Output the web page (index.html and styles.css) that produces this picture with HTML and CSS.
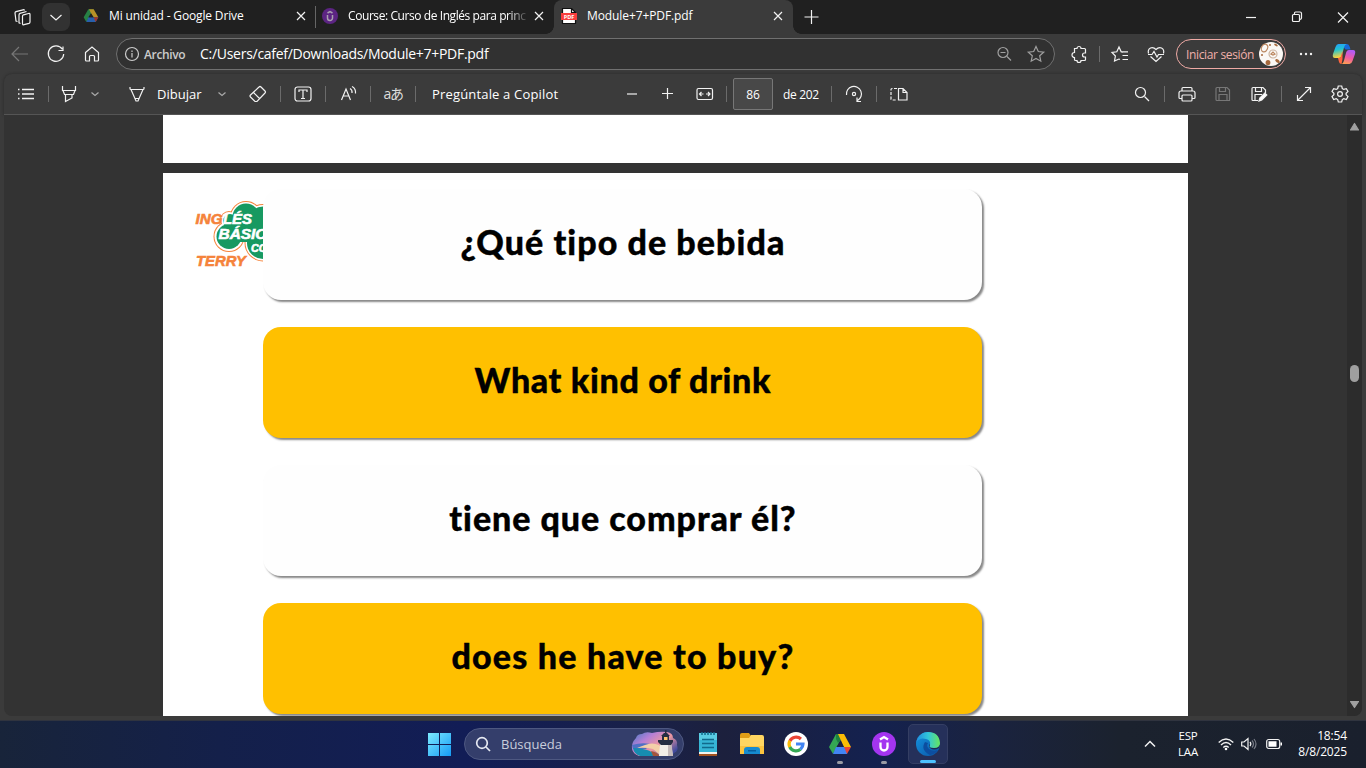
FILE: index.html
```html
<!DOCTYPE html>
<html lang="es">
<head>
<meta charset="utf-8">
<title>Module+7+PDF.pdf</title>
<link rel="stylesheet" href="styles.css">
</head>
<body>
<div class="tabs">
  <svg class="i24 ws" viewBox="0 0 24 24"><path d="M12.500 11.200q0-1 1-1.400l5-1.300q1.500-.4 1.500 1V17q0 1-1 1.400l-5 1.300q-1.500.4-1.500-1zM10.500 18.500 9 17.800V10q0-1.200 1-1.600l6.500-1.900M7.500 16.500 6 16l-1-8q0-1 1-1.400L13 4.800q1.200-.3 1.500.7"/></svg>
  <div class="tabmenu"><svg class="i16" viewBox="0 0 16 16"><path d="m2.500 6 5.500 5 5.500-5"/></svg></div>
  <div class="tab t1">
    <svg class="i16 plain" viewBox="0 0 24 24"><path fill="#278045" d="M8 2h8L5 21 1 14z"/><path fill="#b99126" d="M9 2h7l7 12h-8z"/><path fill="#285fab" d="M8 14h15l-4 7H5z"/><path fill="#a33529" d="M16 14h7l-4 7z"/><path fill="#202020" d="m12 8 4 6H8z"/></svg>
    <span class="ttl a">Mi unidad - Google Drive</span>
    <svg class="i16 x" viewBox="0 0 16 16"><path d="m4 4 8 8m0-8-8 8"/></svg>
  </div>
  <div class="tab t2">
    <svg class="i16 plain" viewBox="0 0 16 16"><circle cx="8" cy="8" r="8" fill="#5c2483"/><path d="M5.500 7v3a2.500 2.500 0 0 0 5 0V7M5.500 5 8 3.500 10.500 5" fill="none" stroke="#aaa0b0" stroke-width="1.500"/></svg>
    <span class="ttl b">Course: Curso de Inglés para princ</span>
    <svg class="i16 x" viewBox="0 0 16 16"><path d="m4 4 8 8m0-8-8 8"/></svg>
  </div>
  <div class="tab t3">
    <svg class="i16 plain" viewBox="0 0 16 16"><path d="M1.500.5h9l4 4v11h-13z" fill="#fff" stroke="#111"/><path d="M10.500.5v4h4" fill="none" stroke="#111"/><path fill="#f83e3e" d="M0 5h16v7H0z"/><text x="8" y="10.700" text-anchor="middle" class="pdf">PDF</text></svg>
    <span class="ttl c">Module+7+PDF.pdf</span>
    <svg class="i16 x" viewBox="0 0 16 16"><path d="m4 4 8 8m0-8-8 8"/></svg>
  </div>
  <svg class="i16 plus" viewBox="0 0 16 16"><path d="M8.500 1v14M1.500 8h14"/></svg>
  <div class="win">
    <svg class="i16" viewBox="0 0 16 16"><path d="M3 8.500h10"/></svg>
    <svg class="i16" viewBox="0 0 16 16"><rect x="3.500" y="5.500" width="7" height="7" rx="1"/><path d="M5.500 5V4q0-1 1-1H11q1.500 0 1.500 1.500V9q0 1-1.500 1.500"/></svg>
    <svg class="i16" viewBox="0 0 16 16"><path d="m3 3.500 10 10m0-10-10 10"/></svg>
  </div>
</div>

<div class="nav">
  <svg class="i24 dim" viewBox="0 0 24 24"><path d="M20 12H4m7-7-7 7 7 7"/></svg>
  <svg class="i24" viewBox="0 0 24 24"><path d="M18.300 7.200a7.700 7.700 0 1 0 1.400 4.800M19 4.500v4h-4.500"/></svg>
  <svg class="i24" viewBox="0 0 24 24"><path d="M5.500 10.500 12 5l6.500 5.500V18q0 1-1 1h-3v-4.500q0-1-1-1h-3q-1 0-1 1V19h-3q-1 0-1-1z"/></svg>
  <div class="addr">
    <svg class="i16 soft" viewBox="0 0 16 16"><circle cx="8" cy="8" r="6.500"/><path d="M8 7v4.500M8 4.500V6"/></svg>
    <span class="arch">Archivo</span><span class="url">C:/Users/cafef/Downloads/Module+7+PDF.pdf</span>
    <svg class="i24 mid zout" viewBox="0 0 24 24"><circle cx="11" cy="10.500" r="5"/><path d="m15 14.500 4 4M8.500 10.500h5"/></svg>
    <svg class="i24 mid" viewBox="0 0 24 24"><path d="m12 4.500 2.300 5 5.400.6-4 3.700 1.100 5.400-4.800-2.700-4.800 2.700 1.100-5.400-4-3.700 5.400-.6z"/></svg>
  </div>
  <svg class="i24 ext" viewBox="0 0 24 24"><path d="M7.500 6.500H10a2 2 0 0 1 4 0h3.500q1 0 1 1V11h-1a2 2 0 0 0 0 4h1v2.500q0 1-1 1H14a2 2 0 0 1-4 0H8.500q-1 0-1-1V15.500a2.500 2.500 0 0 1 0-5z"/></svg>
  <i class="sep"></i>
  <svg class="i24" viewBox="0 0 24 24"><path d="m11 17-4.500 2 .9-5L4 10.500l4.800-.7L11 5l2.200 4.800H20M14.500 13.500H20M14.500 17.500H20M11 17l1 .5M13.500 10l1.500.2"/></svg>
  <svg class="i24 heart" viewBox="0 0 24 24"><path d="M4.500 11.500q-1-4 2-5.500 3-1 5.500 1.500Q14.500 5 17.500 6q3 1.500 2 5.500M6.500 14.500 12 19.500l5.500-5M4 12.500h4l2-3 3 5.500 1.500-2.500H20"/></svg>
  <div class="login"><span>Iniciar sesión</span>
    <svg class="avatar" viewBox="0 0 24 24"><circle cx="12" cy="12" r="12" fill="#fbf8f5"/><g fill="none" stroke="#bc8861"><ellipse cx="5.500" cy="6" rx="3" ry="4" transform="rotate(25 5.500 6)"/><circle cx="14" cy="12" r="4" stroke="#cdb5a2"/><path d="m12 12 2-2 2 2-2 1z"/></g><g fill="#a6683c"><ellipse cx="9" cy="20.500" rx="2.400" ry="2.600"/><ellipse cx="18.500" cy="19" rx="2.500" ry="1.600" transform="rotate(35 18.500 19)"/><ellipse cx="17" cy="3" rx="2" ry="1" transform="rotate(30 17 3)"/><circle cx="11" cy="3" r="1"/><circle cx="3" cy="13" r="1"/></g></svg>
  </div>
  <svg class="i24 dots" viewBox="0 0 24 24"><circle cx="7" cy="12" r="1.200"/><circle cx="12" cy="12" r="1.200"/><circle cx="17" cy="12" r="1.200"/></svg>
  <svg class="i24 plain copilot" viewBox="0 0 24 24">
    <defs><linearGradient id="c1" x2=".2" y2="1"><stop stop-color="#269bff"/><stop offset=".45" stop-color="#21c4cf"/><stop offset="1" stop-color="#ffd13b"/></linearGradient><linearGradient id="c2" x1=".5" x2=".2" y2="1"><stop stop-color="#b15bf6"/><stop offset=".5" stop-color="#ef5aa4"/><stop offset="1" stop-color="#ffa34b"/></linearGradient></defs>
    <path fill="#1768d8" d="M9 2h6q2 0 2.800 3l.7 2.500h-5z"/><path fill="url(#c1)" d="M6.500 2H15q-2 0-3 3.500L10 13q-.7 3-3 3H3q-3 0-2-4L3.500 5Q4.500 2 6.500 2z"/><path fill="#ff643e" d="M8.500 15.500 10.500 9v8l-1 5q-2 0-2.500-2l-1-4z"/><path fill="url(#c2)" d="M17 8h4q3 0 2 4l-2.500 7q-1 3-3 3H9q2 0 3-3.500l2-7.500q.7-3 3-3z"/></svg>
</div>

<div class="tools">
  <svg class="i24" viewBox="0 0 24 24"><path d="M8 7.500h12M8 12h12M8 16.500h12M4 7.500h1.500M4 12h1.500M4 16.500h1.500" stroke-width="1.400"/></svg>
  <i class="sep"></i>
  <svg class="i24 hl" viewBox="0 0 24 24"><path d="M5.500 4v4.500h13V4M6 8.500l1.500 4h9l1.500-4M8.500 12.500v7l6.500-3.500v-3.500"/></svg>
  <svg class="i16 ch" viewBox="0 0 16 16"><path d="m4.500 6.500 3.500 3 3.500-3"/></svg>
  <svg class="i24 draw" viewBox="0 0 24 24"><path d="M5 5v1.500q0 1 1 1h12q1 0 1-1V5M6 7.500l5 11.500h2l5-11.500M10 16.500h4"/></svg>
  <span class="lbl dib">Dibujar</span>
  <svg class="i16 ch2" viewBox="0 0 16 16"><path d="m4.500 6.500 3.500 3 3.500-3"/></svg>
  <svg class="i24 er" viewBox="0 0 24 24"><path d="m4.500 13 8.500-8q1-1 2 0l4 4q1 1 0 2l-8 8.500H9L4.500 15q-1-1 0-2zM7.500 10.500l6.500 6.500"/></svg>
  <i class="sep"></i>
  <svg class="i24" viewBox="0 0 24 24"><rect x="4" y="5" width="16" height="14" rx="2.500"/><path d="M8 10V8h8v2M12 8v8.500M10 16.500h4"/></svg>
  <i class="sep"></i>
  <svg class="i24" viewBox="0 0 24 24"><path d="M5.500 18 10 7l4.500 11M7 14h6M14 6.500q2.500 1.500 2 4.500M16 4.500q4 2 3.500 7"/></svg>
  <i class="sep"></i>
  <span class="aa">aあ</span>
  <i class="sep"></i>
  <span class="lbl ask">Pregúntale a Copilot</span>
  <svg class="i24 minus" viewBox="0 0 24 24"><path d="M7 12h10"/></svg>
  <svg class="i24 add" viewBox="0 0 24 24"><path d="M6 11.500h11M11.500 6v11"/></svg>
  <svg class="i24 fit" viewBox="0 0 24 24"><rect x="4" y="6.500" width="15.500" height="11" rx="1.500"/><path d="M6.500 12h4m2.500 0h4M8.500 10l-2 2 2 2m6.500-4 2 2-2 2"/></svg>
  <i class="sep s9"></i>
  <div class="pg">86</div>
  <span class="of">de 202</span>
  <i class="sep s12"></i>
  <svg class="i24" viewBox="0 0 24 24"><path d="M4.500 13a7.500 7.500 0 1 1 11 5.500M19 19.500h-4V15.500"/><circle cx="12" cy="12" r="1.600"/></svg>
  <i class="sep"></i>
  <svg class="i24" viewBox="0 0 24 24"><path d="M11.500 6.500h4.500l4 4v7.500h-8.500zM16 6.500v4h4"/><path stroke-dasharray="3 1.500" d="M10 6.500H5q-1 0-1 1V17q0 1 1 1h5"/></svg>
  <div class="rt">
    <svg class="i24" viewBox="0 0 24 24"><circle cx="10.500" cy="10.500" r="5"/><path d="m14.500 14.500 4.500 4.500"/></svg>
    <i class="sep"></i>
    <svg class="i24" viewBox="0 0 24 24"><path d="M7 9V6.500q0-1 1-1h8q1 0 1 1V9M7 16.500H5q-1 0-1-1V11q0-2 2-2h12q2 0 2 2v4.500q0 1-1 1h-2"/><rect x="7" y="13" width="10" height="6" rx="1"/></svg>
    <svg class="i24 dim g12" viewBox="0 0 24 24"><path d="M6 5.500h10l2.500 2.500v10.500H6q-1 0-1-1v-11q0-1 1-1zM8.500 5.500v4h6v-4M8 18.500v-6h8v6"/></svg>
    <svg class="i24 g12" viewBox="0 0 24 24"><path d="M11 18.500H6q-1 0-1-1v-11q0-1 1-1h10l2.500 2.500v3M8.500 5.500v4h6v-4M8 18.500v-6h7"/><path fill="#fff" d="m12 19 .8-3 5-5 2 2-5 5z"/></svg>
    <i class="sep"></i>
    <svg class="i24" viewBox="0 0 24 24"><path d="M5.500 18.500 18.500 5.500M13 5.500h5.500V11M5.500 13v5.500H11"/></svg>
    <svg class="i24 g12" viewBox="0 0 24 24"><path d="m10.300 4-.6 2.500-1.500.9-2.500-.8L4 9.500 5.900 11.300v1.500L4 14.500l1.700 3 2.500-.8 1.500.9.600 2.400h3.400l.6-2.400 1.500-.9 2.500.8 1.700-3-1.900-1.700v-1.500L20 9.500l-1.700-2.900-2.500.8-1.500-.9-.6-2.500z"/><circle cx="12" cy="12" r="2.400"/></svg>
  </div>
</div>

<div class="viewer">
  <div class="doc">
    <div class="prev"></div>
    <div class="page">
      <svg class="logo" viewBox="190 190 74 90">
        <g fill="#f5833b"><circle cx="246" cy="217" r="16"/><circle cx="263" cy="222" r="18"/><circle cx="229" cy="236.500" r="15.500"/><circle cx="229" cy="220" r="9"/><circle cx="263" cy="243" r="18.500"/></g>
        <g fill="#fff"><circle cx="246" cy="217" r="15"/><circle cx="263" cy="222" r="17"/><circle cx="229" cy="236.500" r="14.500"/><circle cx="229" cy="220" r="8"/><circle cx="263" cy="243" r="17.500"/></g>
        <g fill="#179961"><circle cx="246" cy="217" r="13.500"/><circle cx="263" cy="222" r="15.500"/><circle cx="229" cy="236.500" r="12.500"/><circle cx="230" cy="221" r="7"/><circle cx="263" cy="243" r="16"/><path d="M225 222h38v20h-38z"/></g>
        <g class="lt"><text x="195.500" y="224" textLength="27" lengthAdjust="spacingAndGlyphs" class="or">ING</text><text x="223" y="224" textLength="29" lengthAdjust="spacingAndGlyphs">LÉS</text><text x="218.500" y="238.500" textLength="48" lengthAdjust="spacingAndGlyphs">BÁSIC</text><text x="251" y="252" textLength="16" lengthAdjust="spacingAndGlyphs" class="sm">CO</text><text x="196" y="265.500" textLength="50" lengthAdjust="spacingAndGlyphs" class="or">TERRY</text></g>
      </svg>
      <div class="cards">
        <div class="card w"><span class="q1">¿Qué tipo de bebida</span></div>
        <div class="card y"><span class="q2">What kind of drink</span></div>
        <div class="card w"><span class="q3">tiene que comprar él?</span></div>
        <div class="card y"><span class="q4">does he have to buy?</span></div>
      </div>
    </div>
  </div>
  <div class="bar">
    <svg viewBox="0 0 15 24"><path d="M7.500 8.500 11.500 15h-8z"/></svg>
    <div class="thumb"></div>
    <svg viewBox="0 0 15 24"><path d="m7.500 15.500 4-6h-8z"/></svg>
  </div>
</div>

<div class="task">
  <svg class="start" viewBox="0 0 24 24"><defs><linearGradient id="w" x2="1" y2="1"><stop stop-color="#7deaff"/><stop offset="1" stop-color="#159bf5"/></linearGradient></defs><path fill="url(#w)" d="M1 1h11v11H1zM13 1h11v11H13zM1 13h11v11H1zM13 13h11v11H13z"/></svg>
  <div class="search">
    <svg class="i16" viewBox="0 0 16 16"><circle cx="7" cy="7" r="5.300"/><path d="m11 11 4 4"/></svg><span>Búsqueda</span>
    <svg class="light" viewBox="0 0 48 28"><defs><linearGradient id="s" x2="1" y2=".7"><stop stop-color="#3f7cc4"/><stop offset=".35" stop-color="#b57fd6"/><stop offset=".65" stop-color="#ee98a0"/><stop offset="1" stop-color="#414a9c"/></linearGradient></defs>
      <path fill="url(#s)" d="M5 8q1-4 6-4 4-3 10-1 8-2 15-1 6 1 6 6 5 2 4 7 2 6-3 8-2 3-6 3H8q-6-2-7-7-1-6 4-11z"/>
      <path fill="#4f70c4" d="M1 15q10-3 18-1l-4 5H2z"/><path fill="#168cb0" d="M2 18q8 0 14 2 5 1 8 6H9q-6-2-7-8z"/><path fill="#f3cfa8" d="M14 15q7-3 14 0l3 3-2 7-7-6q-8-2-16-1 5-2 8-3z"/><path fill="#a4563c" d="M20 21q6 1 9 5h-7z"/>
      <path fill="#f2eee8" d="M29 14h11l2 12H28z"/><path fill="#c6bcbc" d="M37 14h3.500l1.500 12h-5z"/><path fill="#252e43" d="M27 10h15v2l-2 3H30l-3-3zM31 6h7v4h-7zM30 6l3-3h1V0h1.500v3H36l3 3z"/><path fill="#ffc46d" d="M33 7h3.500v3H33z"/></svg>
  </div>
  <svg class="app note" viewBox="0 0 24 24"><path fill="#36b5d5" d="M3 1h18v22H3z"/><path fill="#72dced" d="M3 1h18v7H3z" opacity=".6"/><path fill="#f2f2ed" d="M3 20h18v2H3z"/><path fill="#a2521f" d="M3 22h18v2H3z"/><path stroke="#116a8c" stroke-width="1.500" d="M6 7.500h12M6 11.500h12M6 15.500h12M6 0v3m3-3v3m3-3v3m3-3v3m3-3v3"/></svg>
  <svg class="app" viewBox="0 0 24 24"><path fill="#df9d16" d="M0 3q0-2 2-2h7l2 3v5H0z"/><path fill="#ffd661" d="M0 6h9l2-3h11q2 0 2 2v17H0z"/><path fill="#fcc43f" d="M0 14h24v8H0z"/><path fill="#168bd0" d="M4 22v-4q0-3 3-3h10q3 0 3 3v4z"/><path fill="#075f9e" d="M8 18h8v1.500H8z"/></svg>
  <svg class="app" viewBox="0 0 24 24"><circle cx="12" cy="12" r="12" fill="#fff"/><g fill="none" stroke-width="3.200"><path stroke="#ea4335" d="M5.900 9a7 7 0 0 1 11-2"/><path stroke="#fbbc05" d="M5.900 15.300a7 7 0 0 1 0-6.500"/><path stroke="#34a853" d="M16.500 17.300A7 7 0 0 1 5.800 15"/><path stroke="#4285f4" d="M12 12h7q0 3-2.500 5.300"/></g></svg>
  <div class="slot"><svg class="app" viewBox="0 0 24 24"><path fill="#34a853" d="M8 2h8L5 22 1 15z"/><path fill="#1d8140" d="M8 2h4l2 4-4 5-2-4z"/><path fill="#fbbc05" d="M10 2h6l7 13h-7z"/><path fill="#4285f4" d="M8 15h11v7H5z"/><path fill="#ea4335" d="M16 15h7l-4 7z"/><path fill="#1c2043" d="m12 9 3.500 6h-7z"/></svg><i></i></div>
  <div class="slot"><svg class="app" viewBox="0 0 24 24"><circle cx="12" cy="12" r="12" fill="#a435f0"/><path d="M8.500 10.500v4.500a3.500 3.500 0 0 0 7 0v-4.500M8 7.500 12 5l4 2.500" fill="none" stroke="#fff" stroke-width="2.300"/></svg><i></i></div>
  <div class="slot on"><svg class="app" viewBox="0 0 24 24"><defs><linearGradient id="e" x1="0" x2="1"><stop stop-color="#218ce0"/><stop offset=".5" stop-color="#31c6da"/><stop offset="1" stop-color="#67e55c"/></linearGradient><linearGradient id="f" x2="1" y2="1"><stop stop-color="#1494df"/><stop offset="1" stop-color="#0b54a5"/></linearGradient></defs><circle cx="12" cy="12" r="12" fill="url(#f)"/><path fill="#1d2a55" d="M14 12q-2 2 0 4 4 3 9 0l1-3z"/><path fill="url(#e)" d="M.3 10C2 3 7 0 12 0q11 0 12 11 0 5-6 5-6 0-4-3 1-5-4-6Q4 5 .3 10z"/><path fill="#0c4ea0" d="M9 10q-5 8 5 13 5-.5 8-5-5 2-9-1-3-3-1-6z"/></svg><i></i></div>
  <div class="tray">
    <svg class="i16" viewBox="0 0 16 16"><path d="m3 10.500 5-5 5 5" stroke-width="1.500"/></svg>
    <div class="lang">ESP<br>LAA</div>
    <svg class="i16 wifi" viewBox="0 0 16 16"><path d="M.7 6.500q7.300-7 14.600 0M3 9q5-5 10 0M5.300 11.500q2.700-2.500 5.400 0" stroke-width="1.400"/><circle cx="8" cy="13" r="1.300" fill="#fff" stroke="none"/></svg>
    <svg class="i16 vol" viewBox="0 0 16 16"><path d="M.7 6v4H3l4 3.500v-11L3 6zM9 6q1.700 2 0 4"/><path d="M11 4.500q3 3.500 0 7M13 3q4 5 0 10" stroke="#777b86"/></svg>
    <svg class="i16 bat" viewBox="0 0 16 16"><rect x=".7" y="3.500" width="13" height="9" rx="2"/><path fill="#fff" stroke="none" d="M2.500 5.200h8v5.600h-8zM14.500 6.500h1.500v3h-1.500z"/></svg>
    <div class="time">18:54<br>8/8/2025</div>
  </div>
</div>
</body>
</html>
```
FILE: styles.css
```css
* { box-sizing: border-box; }
body { margin: 0; width: 1366px; height: 768px; overflow: hidden; background: #3b3b3b; color: #fff; font: 13px "Open Sans", "Noto Sans", sans-serif; display: flex; flex-direction: column; }
span { white-space: nowrap; flex: none; }
svg { flex: none; display: block; fill: none; stroke: #f2f2f2; stroke-width: 1.2; }
.i24 { width: 24px; height: 24px; }
.i16 { width: 16px; height: 16px; }
.plain, .app, .start, .light, .logo, .avatar { stroke: none; }
.dim { stroke: #777; }
.mid { stroke: #a0a0a0; }
.soft { stroke: #ccc; }
.sep { flex: none; width: 1px; height: 16px; margin: 0 10px; background: #6b6b6b; }

.tabs { height: 34px; flex: none; background: #202020; display: flex; align-items: center; }
.ws { margin-left: 10px; }
.tabmenu { width: 28px; height: 28px; margin-left: 8px; border-radius: 8px; background: #323232; display: grid; place-items: center; }
.tab { height: 100%; display: flex; align-items: center; flex: none; padding-bottom: 2px; }
.ttl { margin-left: 10px; font-size: 12px; line-height: 18px; padding-bottom: 1px; }
.t1 { width: 246px; padding-left: 13px; border-right: 1px solid transparent; border-image: linear-gradient(transparent 7px, #666 7px 27px, transparent 27px) 1; }
.t2 { width: 238px; padding-left: 6px; }
.t3 { width: 239px; padding-left: 7px; background: #3b3b3b; border-radius: 8px 8px 0 0; position: relative; }
.t3::before, .t3::after { content: ""; position: absolute; bottom: 0; width: 8px; height: 8px; }
.t3::before { left: -8px; background: radial-gradient(circle at 0 0, transparent 7.5px, #3b3b3b 8px); }
.t3::after { right: -8px; background: radial-gradient(circle at 100% 0, transparent 7.5px, #3b3b3b 8px); }
.a { width: 150px; letter-spacing: -.15px; }
.b { width: 182px; letter-spacing: -.42px; -webkit-mask-image: linear-gradient(90deg, #000 160px, transparent 181px); mask-image: linear-gradient(90deg, #000 160px, transparent 181px); }
.c { width: 150px; letter-spacing: -.1px; }
.x { margin-left: auto; margin-right: 7px; }
.t1 .x { margin-right: 6px; }
.pdf { font: bold 5.500px "Open Sans", sans-serif; fill: #fff; }
.plus { margin-left: 10px; }
.win { margin-left: auto; margin-right: 15px; display: flex; gap: 30px; }

.nav { height: 40px; flex: none; display: flex; align-items: center; padding-left: 8px; }
.nav > .i24 + .i24 { margin-left: 12px; }
.addr { width: 939px; height: 32px; margin-left: 12px; border: 1px solid #707070; border-radius: 16px; background: #313131; display: flex; align-items: center; padding: 0 6px 0 7px; }
.arch { margin-left: 4px; width: 56px; font-size: 12px; font-weight: 600; color: #ccc; letter-spacing: -.35px; }
.url { font-size: 14px; letter-spacing: -.28px; padding-bottom: 1px; }
.zout { margin-left: auto; margin-right: 8px; }
.ext { margin-left: 12px; }
.nav .sep { margin: 0 8px; }
.login { width: 110px; height: 30px; margin-left: 8px; border: 1px solid #efaaa5; border-radius: 15px; color: #f1b0ab; display: flex; align-items: center; justify-content: space-between; padding: 0 2px 0 9px; font-size: 12px; letter-spacing: -.35px; }
.avatar { width: 24px; height: 24px; }
.dots { margin-left: 8px; fill: #f2f2f2; stroke: none; }
.nav > .copilot.i24 { margin-left: 14px; }

.tools { height: 41px; flex: none; margin: 0 4px; padding: 0 10px; border-bottom: 1px solid #555; border-radius: 8px 8px 0 0; background: #3b3b3b; box-shadow: 0 0 3px #292929; display: flex; align-items: center; }
.hl { margin-left: -2px; }
.ch { margin-left: 6px; stroke: #aaa; }
.draw { margin-left: 22px; }
.lbl { font-size: 13px; }
.dib { margin-left: 8px; width: 45px; }
.ch2 { margin-left: 12px; stroke: #aaa; }
.er { margin-left: 16px; }
.aa { width: 24px; text-align: center; font: 14px/20px "Open Sans", "Noto Sans CJK JP", sans-serif; letter-spacing: -1.5px; color: #ddd; }
.ask { margin-left: 6px; width: 126px; letter-spacing: .17px; }
.minus { margin-left: 62px; }
.add { margin-left: 12px; }
.fit { margin-left: 13px; }
.tools .s9 { margin: 0 6px 0 9px; }
.pg { width: 40px; height: 32px; border: 1px solid #777; border-radius: 2px; background: #484848; display: grid; place-items: center; font-size: 12px; flex: none; }
.of { margin-left: 10px; width: 36px; font-size: 12px; letter-spacing: -.35px; }
.tools .s12 { margin-left: 12px; }
.rt { margin-left: auto; display: flex; align-items: center; }
.g12 { margin-left: 12px; }

.viewer { height: 601px; flex: none; margin: 0 4px; background: #333; display: flex; border-radius: 0 0 8px 8px; overflow: hidden; }
.doc { width: 1025px; margin-left: 159px; }
.prev { height: 48px; background: #fff; }
.page { margin-top: 10px; height: 543px; background: #fff; display: flex; overflow: hidden; }
.logo { width: 74px; height: 90px; margin: 17px 0 0 27px; }
.lt { font: italic 900 14.500px "Liberation Sans", sans-serif; fill: #fff; stroke: #fff; stroke-width: .6; }
.lt .or { fill: #f5833b; stroke: #f5833b; }
.lt .sm { font-size: 10.500px; }
.cards { flex: none; width: 719px; margin-left: -.6px; padding-top: 16px; display: flex; flex-direction: column; gap: 27.5px; }
.card { height: 110.5px; flex: none; border-radius: 18px; display: grid; place-items: center; padding-bottom: 5px; color: #000; font: 900 34px/40px Lato, sans-serif; font-variant-ligatures: none; -webkit-text-stroke: .4px #000; box-shadow: 2px 2px 2px #888; }
.w { background: #fefefe; box-shadow: 2px 2px 2px -.5px #888; }
.y { background: #ffc000; }
.q1 { letter-spacing: 1.05px; }
.q2 { letter-spacing: .65px; }
.q3 { letter-spacing: .95px; }
.q4 { letter-spacing: 1.2px; }
.bar { margin-left: auto; width: 15px; background: #2c2c2c; display: flex; flex-direction: column; justify-content: space-between; align-items: center; }
.bar svg { width: 15px; height: 24px; fill: #a0a0a0; stroke: #a0a0a0; stroke-linejoin: round; }
.thumb { width: 9px; height: 17px; border-radius: 5px; background: #9f9f9f; margin-bottom: 85px; }

.task { height: 48px; margin-top: 4px; flex: none; background: linear-gradient(90deg, #18243a, #14204a 16%, #121d56 34%, #192149 47%, #1c203d 53%, #14214f 64%, #1a2340 72%, #1b222e 82%, #1a202d); border-top: 1px solid #30343f; display: flex; align-items: center; padding: 0 0 1px 427px; }
.start { width: 24px; height: 24px; margin-right: 13px; }
.search { width: 220px; height: 32px; border: 1px solid #4e5881; border-radius: 16px; background: #343e6b; display: flex; align-items: center; padding: 0 4px 0 10px; color: #c9cddb; margin-right: 12px; }
.search span { margin-left: 10px; }
.search .i16 { stroke: #e6e9f2; stroke-width: 1.7; }
.light { width: 48px; height: 28px; margin-left: auto; }
.app { width: 24px; height: 24px; margin-right: 20px; }
.slot { width: 40px; height: 40px; margin: 0 4px 0 0; display: grid; place-items: center; border-radius: 5px; position: relative; flex: none; }
.slot .app { margin: 0; }
.slot i { position: absolute; bottom: 0; left: 17px; width: 6px; height: 3px; border-radius: 2px; background: #9a9ba4; }
.slot:nth-of-type(2) { margin-left: -8px; }
.on { background: #25305a; border: 1px solid #343e63; }
.slot.on i { left: 11px; width: 16px; background: #4cc2ff; }
.tray { margin-left: auto; margin-right: 19px; display: flex; align-items: center; font-size: 12px; line-height: 16px; letter-spacing: -.15px; }
.lang { width: 40px; margin-left: 10px; text-align: center; font-size: 11.5px; }
.wifi { margin-left: 10px; }
.vol { margin-left: 7px; }
.bat { margin-left: 9px; }
.time { width: 65px; text-align: right; }
```
